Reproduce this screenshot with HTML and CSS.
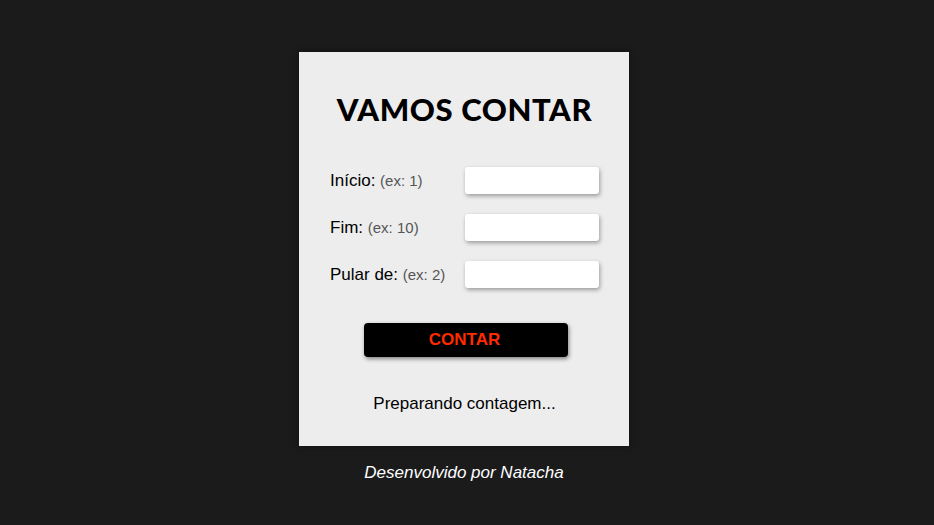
FILE: index.html
```html
<!DOCTYPE html>
<html lang="pt-BR">
<head>
<meta charset="utf-8">
<title>Vamos contar</title>
<link rel="stylesheet" href="styles.css">
</head>
<body>
<main class="card">
  <h1 class="title">VAMOS CONTAR</h1>
  <div class="form">
    <div class="row"><label class="label">Início: <span class="hint">(ex: 1)</span></label><input class="field" type="text"></div>
    <div class="row"><label class="label">Fim: <span class="hint">(ex: 10)</span></label><input class="field" type="text"></div>
    <div class="row"><label class="label">Pular de: <span class="hint">(ex: 2)</span></label><input class="field" type="text"></div>
  </div>
  <button class="btn" type="button">CONTAR</button>
  <p class="result">Preparando contagem...</p>
</main>
<footer class="footer">Desenvolvido por Natacha</footer>
</body>
</html>
```
FILE: styles.css
```css
html, body {
  margin: 0;
  padding: 0;
}
body {
  background: #1b1b1b;
  font-family: Arial, "Liberation Sans", sans-serif;
  display: flex;
  flex-direction: column;
  align-items: center;
  padding-top: 52px;
  padding-right: 6px;
  min-height: 525px;
  box-sizing: border-box;
}
.card {
  width: 330px;
  height: 394px;
  box-sizing: border-box;
  background: #ededed;
  padding: 38px 30px 0 31px;
  display: flex;
  flex-direction: column;
  box-shadow: 0 0 8px rgba(0,0,0,0.4);
}
.title {
  margin: 0;
  font-family: Lato, sans-serif;
  font-weight: 900;
  font-size: 31px;
  letter-spacing: 0.6px;
  line-height: 38px;
  text-align: center;
  color: #000;
}
.form {
  margin-top: 39px;
  display: flex;
  flex-direction: column;
  gap: 20px;
}
.row {
  display: flex;
  justify-content: space-between;
  align-items: center;
  height: 27px;
}
.label {
  font-size: 17px;
  color: #000;
}
.hint {
  font-size: 15px;
  color: #555;
}
.field {
  width: 134px;
  height: 27px;
  box-sizing: border-box;
  border: none;
  border-radius: 3px;
  background: #fff;
  box-shadow: 1px 2px 4px rgba(0,0,0,0.35);
  outline: none;
}
.btn {
  align-self: center;
  margin-top: 35px;
  margin-left: 3px;
  width: 204px;
  height: 34px;
  padding: 0 3px 0 0;
  border: none;
  border-radius: 4px;
  background: #000;
  color: #ff2a00;
  font-family: Arial, "Liberation Sans", sans-serif;
  font-weight: bold;
  font-size: 17px;
  box-shadow: 1px 2px 4px rgba(0,0,0,0.45);
  cursor: pointer;
}
.result {
  margin: 37px 0 0;
  text-align: center;
  font-size: 17px;
  color: #000;
}
.footer {
  margin-top: 17px;
  font-style: italic;
  font-size: 17px;
  color: #fff;
}
```
